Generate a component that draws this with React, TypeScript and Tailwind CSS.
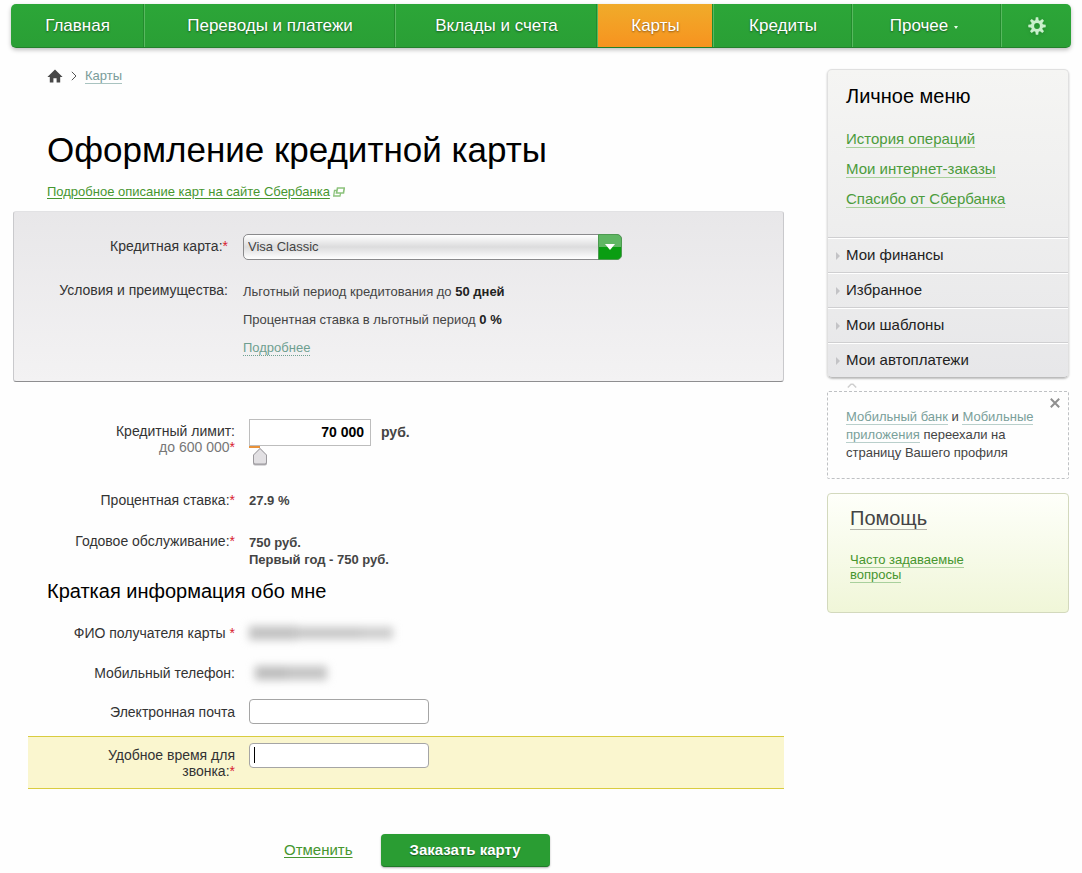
import { useState, type ReactNode } from 'react'
import clsx from 'clsx'

const navItems = ['Главная', 'Переводы и платежи', 'Вклады и счета', 'Карты', 'Кредиты']
const historyLinks = ['История операций', 'Мои интернет-заказы', 'Спасибо от Сбербанка']
const menuSections = ['Мои финансы', 'Избранное', 'Мои шаблоны', 'Мои автоплатежи']

const MIN_LIMIT = 15000
const MAX_LIMIT = 600000

function Gear() {
  return (
    <svg viewBox="0 0 18 18" className="h-[18px] w-[18px] drop-shadow" fill="none">
      <g fill="#c9f0cc">
        {[0, 45, 90, 135, 180, 225, 270, 315].map((angle) => (
          <path key={angle} d="M7.3 4 L7.8 0.3 H10.2 L10.7 4 Z" transform={`rotate(${angle} 9 9)`} />
        ))}
      </g>
      <circle cx="9" cy="9" r="4.5" stroke="#c9f0cc" strokeWidth="3.2" />
    </svg>
  )
}

function Header() {
  const cell =
    'flex items-center justify-center border-l border-l-[#58b85f] shadow-[-1px_0_0_#238c2d] first:border-l-0 first:shadow-none'
  return (
    <div className="mx-[11px] rounded-[5px] shadow-[0_2px_4px_rgba(0,0,0,0.25)]">
      <nav className="grid h-11 grid-cols-[133fr_251fr_202fr_116fr_139fr_149fr_70fr] overflow-hidden rounded-[5px] border-b border-[#23802b] bg-linear-to-b from-[#2ca638] to-[#2a9f35] text-[17px] text-white [text-shadow:0_1px_2px_rgba(0,0,0,0.45)]">
        {navItems.map((item) => (
          <a
            key={item}
            href="#"
            className={clsx(cell, item === 'Карты' && 'bg-linear-to-b from-[#f0ab2a] to-[#f7931f]')}
          >
            {item}
          </a>
        ))}
        <a href="#" className={clsx(cell, 'pr-1.5')}>
          Прочее
          <svg viewBox="0 0 4 3" className="mt-1 ml-1.5 h-[3px] w-1">
            <path d="M0 0 H4 L2 3 Z" fill="#e8fbe9" />
          </svg>
        </a>
        <a href="#" aria-label="Настройки" className={cell}>
          <Gear />
        </a>
      </nav>
    </div>
  )
}

function Breadcrumbs() {
  return (
    <div className="ml-[34px] flex h-5 items-center text-[13px]">
      <a href="#" aria-label="Главная">
        <svg viewBox="0 0 16 14" className="h-3.5 w-4">
          <path d="M8 0.5 L15.6 8 H13.2 V13.5 H9.6 V9.2 H6.4 V13.5 H2.8 V8 H0.4 Z" fill="#484848" />
        </svg>
      </a>
      <svg viewBox="0 0 6 10" className="ml-2 h-2.5 w-1.5" fill="none" stroke="#555">
        <path d="M0.8 0.8 L5 5 L0.8 9.2" />
      </svg>
      <a href="#" className="ml-2 border-b border-[#a9c3c0] leading-[14px] text-[#7a9c9a]">
        Карты
      </a>
    </div>
  )
}

function Star() {
  return <span className="text-[#d8202f]">*</span>
}

function Row({ label, htmlFor, children }: { label: ReactNode; htmlFor?: string; children: ReactNode }) {
  return (
    <div className="grid grid-cols-[222px_1fr] gap-x-3.5">
      <label htmlFor={htmlFor} className="text-right text-sm leading-4 text-[#333]">
        {label}
      </label>
      {children}
    </div>
  )
}

function CardPanel() {
  return (
    <section className="mt-[11px] grid grid-cols-[214px_1fr] gap-x-[15px] gap-y-[18px] rounded-[3px] border border-[#c9c9cc] border-t-[#e2e2e4] border-b-[#8e8e90] bg-linear-to-b from-[#e8e7e9] to-[#f3f2f3] pt-[22px] pb-[19px]">
      <label htmlFor="card" className="pt-1 text-right text-sm leading-4 text-[#333]">
        Кредитная карта:
        <Star />
      </label>
      <div className="relative h-[26px] w-full max-w-[379px]">
        <select
          id="card"
          className="h-full w-full appearance-none rounded-[5px] border border-[#8a8a8c] bg-linear-to-b from-white via-[#dcdcdd] to-white pl-1 text-[13px] text-[#444]"
        >
          <option>Visa Classic</option>
          <option>Visa Gold</option>
        </select>
        <span className="pointer-events-none absolute inset-y-0 right-0 flex w-6 items-center justify-center rounded-r-[5px] border border-[#4d9a50] bg-linear-to-b from-[#5fb663] from-50% to-[#0a9d12] to-50%">
          <svg viewBox="0 0 10 6" className="h-1.5 w-2.5">
            <path d="M0 0 H10 L5 6 Z" fill="#fff" />
          </svg>
        </span>
      </div>
      <div className="pt-1 text-right text-sm leading-4 text-[#333]">Условия и преимущества:</div>
      <div className="text-[13px] leading-7 text-[#444]">
        <p>
          Льготный период кредитования до <b className="text-[#222]">50 дней</b>
        </p>
        <p>
          Процентная ставка в льготный период <b className="text-[#222]">0 %</b>
        </p>
        <p>
          <a href="#" className="border-b border-dotted border-[#6f9f90] text-[#6f9f90]">
            Подробнее
          </a>
        </p>
      </div>
    </section>
  )
}

function LimitField() {
  const [limit, setLimit] = useState(70000)
  const percent = ((limit - MIN_LIMIT) / (MAX_LIMIT - MIN_LIMIT)) * 100

  return (
    <div className="flex gap-2.5 font-bold">
      <div className="w-[122px]">
        <input
          id="limit"
          value={limit.toLocaleString('ru-RU').replace(/\s/g, ' ')}
          onChange={(e) => setLimit(Number(e.target.value.replace(/\D/g, '')))}
          className="block h-[27px] w-full border border-[#bdbdbd] bg-white pr-1.5 pb-0.5 text-right text-sm text-black"
        />
        <div className="relative h-5">
          <div className="h-0.5 bg-[#e8923a]" style={{ width: `${percent}%` }} />
          <svg
            viewBox="0 0 18 20"
            className="absolute top-0 h-5 w-[18px] -translate-x-1/2"
            style={{ left: `${percent}%` }}
          >
            <path d="M2 9.500 L9 2 L16 9.500 V17.500 Q16 19.500 14 19.500 H4 Q2 19.500 2 17.500 Z" fill="#b5b3b7" />
            <path
              d="M2.500 9 L9 2.500 L15.500 9 V16 Q15.500 18 14 18 H4 Q2.500 18 2.500 16 Z"
              fill="#e2e0e3"
              stroke="#9b999d"
            />
          </svg>
          <input
            type="range"
            aria-label="Кредитный лимит"
            min={MIN_LIMIT}
            max={MAX_LIMIT}
            step={5000}
            value={limit}
            onChange={(e) => setLimit(Number(e.target.value))}
            className="absolute inset-0 w-full opacity-0"
          />
        </div>
      </div>
      <span className="pt-[5px] text-sm leading-4 text-[#444]">руб.</span>
    </div>
  )
}

function Application() {
  const textInput = 'block h-[25px] w-[180px] rounded-[4px] border border-[#a5a5a5] bg-white px-1 text-[13px]'
  return (
    <main className="min-w-0 flex-1">
      <Breadcrumbs />
      <h1 className="mt-11 ml-[34px] text-[35px] leading-10 text-black">Оформление кредитной карты</h1>
      <div className="mt-3.5 ml-[34px] flex items-center gap-[3px] text-[13px] leading-4">
        <a href="#" className="text-[#46962f] underline underline-offset-2">
          Подробное описание карт на сайте Сбербанка
        </a>
        <svg viewBox="0 0 12 10" className="h-2.5 w-3" fill="#fff" stroke="#8cc27c">
          <path d="M1.500 3.500 H8 L7 9 H0.700 Z" strokeWidth="1.300" />
          <path d="M4.500 1 H11.300 L10.500 6 H3.500 Z" strokeWidth="1.600" />
        </svg>
      </div>

      <form onSubmit={(e) => e.preventDefault()}>
        <CardPanel />

        <div className="mt-[37px]">
          <Row
            htmlFor="limit"
            label={
              <span className="block pt-1">
                Кредитный лимит:
                <br />
                <span className="text-[#777]">до 600 000</span>
                <Star />
              </span>
            }
          >
            <LimitField />
          </Row>
        </div>
        <div className="mt-[26px] flex flex-col gap-6 text-[13px] leading-[17px] font-bold text-[#444]">
          <Row label={<span className="font-normal">Процентная ставка:<Star /></span>}>
            <output>27.9 %</output>
          </Row>
          <Row label={<span className="font-normal">Годовое обслуживание:<Star /></span>}>
            <output className="pt-px">
              750 руб.
              <br />
              Первый год - 750 руб.
            </output>
          </Row>
        </div>

        <h2 className="mt-[11px] ml-[34px] text-xl leading-6 text-black">Краткая информация обо мне</h2>

        <div className="mt-[22px] flex flex-col gap-6">
          <Row label={<>ФИО получателя карты <Star /></>}>
            <div className="flex h-4 items-center blur-[4px]">
              <span className="h-3.5 w-12 bg-[#c2c2c2]" />
              <span className="h-3 w-16 bg-[#c6c6c6]" />
              <span className="h-3 w-8 bg-[#cccccc]" />
            </div>
          </Row>
          <Row label="Мобильный телефон:">
            <div className="flex h-4 items-center pl-1.5 blur-[4px]">
              <span className="h-3.5 w-8 bg-[#bdbdbd]" />
              <span className="h-3.5 w-10 bg-[#c4c4c4]" />
            </div>
          </Row>
        </div>
        <div className="mt-[18px]">
          <Row htmlFor="email" label={<span className="block pt-[5px]">Электронная почта</span>}>
            <input id="email" type="email" className={textInput} />
          </Row>
        </div>
        <div className="mt-3 ml-[15px] border-y border-[#d9cc40] bg-[#faf6cf] pt-1.5 pb-[9px]">
          <div className="-ml-[15px]">
            <Row
              htmlFor="time"
              label={
                <span className="block pt-1">
                  Удобное время для
                  <br />
                  звонка:
                  <Star />
                </span>
              }
            >
              <div className="relative">
                <input id="time" className={textInput} />
                <span className="absolute top-1 left-[5px] h-4 w-px bg-black" />
              </div>
            </Row>
          </div>
        </div>

        <div className="mt-[45px] flex items-center pb-1.5 pl-[271px]">
          <a href="#" className="text-[15px] text-[#46962f] underline underline-offset-2">
            Отменить
          </a>
          <button
            type="submit"
            className="ml-7 h-[33px] w-[169px] rounded-[4px] border-b border-[#1f7a28] bg-[#2a9d33] text-[15px] font-bold text-white shadow-[0_1px_2px_rgba(0,0,0,0.3)] [text-shadow:0_1px_1px_rgba(0,0,0,0.45)]"
          >
            Заказать карту
          </button>
        </div>
      </form>
    </main>
  )
}

function Sidebar() {
  return (
    <aside className="w-[242px] shrink-0 pt-[3px]">
      <div className="rounded-[5px] border border-[#e0e0e0] border-b-[#bcbcbc] bg-linear-to-b from-[#f5f5f3] to-[#e7e7e9] shadow-[0_1px_2px_rgba(0,0,0,0.25)]">
        <h2 className="px-[18px] pt-3.5 text-xl leading-6 text-black">Личное меню</h2>
        <ul className="mt-4 mb-[23px] px-[18px] text-[15px] leading-[30px]">
          {historyLinks.map((link) => (
            <li key={link}>
              <a href="#" className="border-b border-[#a8d09c] text-[#4c9c3c]">
                {link}
              </a>
            </li>
          ))}
        </ul>
        <ul className="text-[15px] text-[#222]">
          {menuSections.map((section) => (
            <li key={section} className="border-t border-[#cfcfd1] shadow-[inset_0_1px_0_#fff]">
              <a href="#" className="flex h-[34px] items-center pl-2">
                <svg viewBox="0 0 4 8" className="mt-0.5 mr-1.5 h-2 w-1">
                  <path d="M0 0 L4 4 L0 8 Z" fill="#c3c3c6" />
                </svg>
                {section}
              </a>
            </li>
          ))}
        </ul>
      </div>

      <svg viewBox="0 0 10 5" className="mt-[5px] ml-5 h-[5px] w-2.5" fill="none" stroke="#cfcfcf" strokeWidth="1.500">
        <path d="M0.800 4.500 L4 1.300 H6 L9.200 4.500" />
      </svg>
      <div className="relative mt-[3px] rounded-[2px] border border-dashed border-[#bfc1c4] px-[18px] py-4 text-[13px] leading-[18px] text-[#444]">
        <a href="#" className="border-b border-[#b9cfcb] text-[#7aa09a]">
          Мобильный банк
        </a>{' '}
        и{' '}
        <a href="#" className="border-b border-[#b9cfcb] text-[#7aa09a]">
          Мобильные приложения
        </a>{' '}
        переехали на страницу Вашего профиля
        <button type="button" aria-label="Закрыть" className="absolute top-1.5 right-2">
          <svg viewBox="0 0 10 10" className="h-2.5 w-2.5" stroke="#8f8f8f" strokeWidth="2">
            <path d="M0.800 0.800 L9.200 9.200 M9.200 0.800 L0.800 9.200" />
          </svg>
        </button>
      </div>

      <div className="mt-3.5 rounded-[4px] border border-[#d3d9bd] bg-linear-to-b from-[#fefffa] to-[#f0f6d8] px-[22px] pt-3 pb-[30px]">
        <h2 className="text-xl leading-6">
          <a href="#" className="border-b border-[#b5b5ab] text-[#444]">
            Помощь
          </a>
        </h2>
        <p className="mt-[22px] w-[130px] text-[13px] leading-[15px]">
          <a href="#" className="border-b border-[#a8d09c] text-[#46962f]">
            Часто задаваемые вопросы
          </a>
        </p>
      </div>
    </aside>
  )
}

export default function App() {
  return (
    <div className="bg-[#fefefe] pt-1 font-['Liberation_Sans',Arial,sans-serif]">
      <Header />
      <div className="mt-[18px] flex gap-[43px] px-[13px]">
        <Application />
        <Sidebar />
      </div>
    </div>
  )
}
